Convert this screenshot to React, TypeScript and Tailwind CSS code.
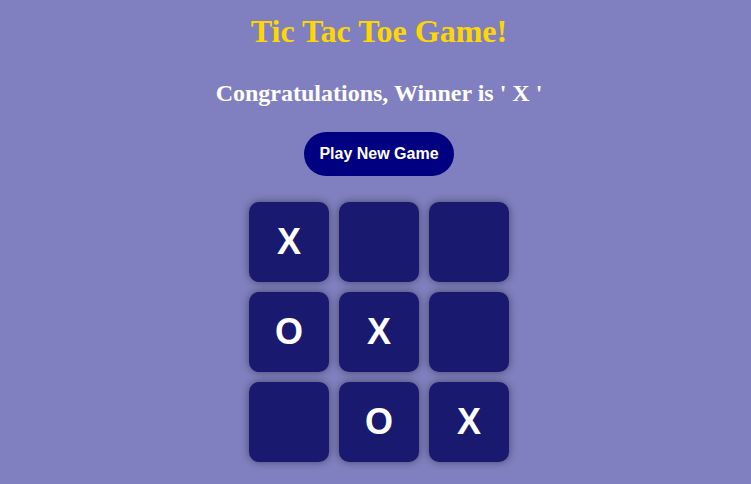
import React from 'react';

const board: string[] = ['X', '', '', 'O', 'X', '', '', 'O', 'X'];

export default function App() {
  return (
    <div className="min-h-[484px] bg-[#8080c0] pl-[7px] text-center">
      <h1 className="pt-[13px] font-['Liberation_Serif',serif] text-[32px] font-bold leading-[37px] text-[#ffd700]">
        Tic Tac Toe Game!
      </h1>
      <h2 className="mt-[29px] font-['Liberation_Serif',serif] text-[24px] font-bold leading-[28px] text-white">
        Congratulations, Winner is ' X '
      </h2>
      <button className="mt-[25px] h-[44px] w-[150px] rounded-full bg-[#000080] font-['Liberation_Sans',Arial,sans-serif] text-[16px] font-bold text-white">
        Play New Game
      </button>
      <div className="mx-auto mt-[26px] grid w-[260px] grid-cols-3 gap-[10px]">
        {board.map((v, i) => (
          <div
            key={i}
            className="flex h-[80px] w-[80px] items-center justify-center rounded-[10px] bg-[#191970] font-['Liberation_Sans',Arial,sans-serif] text-[36px] font-bold text-white shadow-[0_0_8px_rgba(0,0,0,0.45)]"
          >
            {v}
          </div>
        ))}
      </div>
    </div>
  );
}
